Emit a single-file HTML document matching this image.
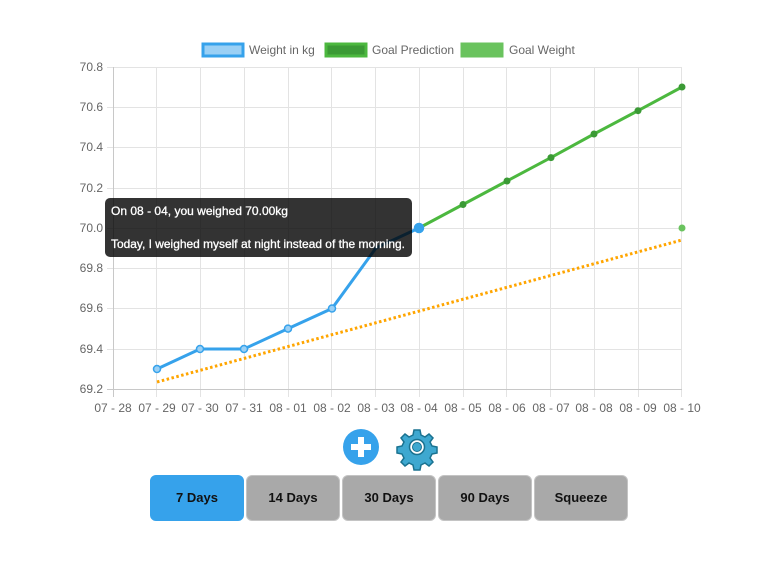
<!DOCTYPE html>
<html><head><meta charset="utf-8"><style>
body{margin:0;background:#fff;width:773px;height:574px;overflow:hidden;font-family:"Liberation Sans",Arial,sans-serif}
.b{position:absolute;top:475px;width:92px;height:44px;border:1px solid #c4c4c4;border-radius:6px;background:#a9a9a9;font:bold 13px "Liberation Sans",sans-serif;color:#111;text-align:center;line-height:44px}
</style></head><body>
<svg width="773" height="574" style="position:absolute;left:0;top:0" font-family="Liberation Sans, Arial, sans-serif">
<g stroke="#e3e3e3" stroke-width="1">
<line x1="107" y1="67.5" x2="682" y2="67.5"/><line x1="107" y1="107.5" x2="682" y2="107.5"/><line x1="107" y1="147.5" x2="682" y2="147.5"/><line x1="107" y1="188.5" x2="682" y2="188.5"/><line x1="107" y1="228.5" x2="682" y2="228.5"/><line x1="107" y1="268.5" x2="682" y2="268.5"/><line x1="107" y1="308.5" x2="682" y2="308.5"/><line x1="107" y1="349.5" x2="682" y2="349.5"/>
<line x1="156.5" y1="67" x2="156.5" y2="397"/><line x1="200.5" y1="67" x2="200.5" y2="397"/><line x1="244.5" y1="67" x2="244.5" y2="397"/><line x1="288.5" y1="67" x2="288.5" y2="397"/><line x1="331.5" y1="67" x2="331.5" y2="397"/><line x1="375.5" y1="67" x2="375.5" y2="397"/><line x1="419.5" y1="67" x2="419.5" y2="397"/><line x1="463.5" y1="67" x2="463.5" y2="397"/><line x1="506.5" y1="67" x2="506.5" y2="397"/><line x1="550.5" y1="67" x2="550.5" y2="397"/><line x1="594.5" y1="67" x2="594.5" y2="397"/><line x1="638.5" y1="67" x2="638.5" y2="397"/><line x1="681.5" y1="67" x2="681.5" y2="397"/>
</g>
<g stroke="#c8c8c8"><line x1="107" y1="389.5" x2="682" y2="389.5"/><line x1="113.5" y1="67" x2="113.5" y2="397"/></g>
<g fill="#666" font-size="12" text-anchor="end">
<text x="103" y="71">70.8</text><text x="103" y="111">70.6</text><text x="103" y="151">70.4</text><text x="103" y="192">70.2</text><text x="103" y="232">70.0</text><text x="103" y="272">69.8</text><text x="103" y="312">69.6</text><text x="103" y="353">69.4</text><text x="103" y="393">69.2</text>
</g>
<g fill="#666" font-size="12" text-anchor="middle">
<text x="113" y="412">07 - 28</text><text x="157" y="412">07 - 29</text><text x="200" y="412">07 - 30</text><text x="244" y="412">07 - 31</text><text x="288" y="412">08 - 01</text><text x="332" y="412">08 - 02</text><text x="376" y="412">08 - 03</text><text x="419" y="412">08 - 04</text><text x="463" y="412">08 - 05</text><text x="507" y="412">08 - 06</text><text x="551" y="412">08 - 07</text><text x="594" y="412">08 - 08</text><text x="638" y="412">08 - 09</text><text x="682" y="412">08 - 10</text>
</g>
<line x1="157" y1="382" x2="682" y2="240" stroke="#ffa500" stroke-width="3" stroke-dasharray="2.5,2.5"/>
<polyline points="419,228 463,204.5 507,181 551,157.6 594,134 638,110.7 682,87" fill="none" stroke="#4cb83f" stroke-width="3"/>
<g fill="#3b9a35"><circle cx="463" cy="204.5" r="3.5"/><circle cx="507" cy="181" r="3.5"/><circle cx="551" cy="157.6" r="3.5"/><circle cx="594" cy="134" r="3.5"/><circle cx="638" cy="110.7" r="3.5"/><circle cx="682" cy="87" r="3.5"/></g>
<circle cx="682" cy="228" r="3.5" fill="#6ac35e"/>
<polyline points="157,369 200,349 244,349 288,328.6 332,308.5 376,248 419,228" fill="none" stroke="#36a2eb" stroke-width="3"/>
<g fill="#9ad0f5" stroke="#36a2eb" stroke-width="1.5"><circle cx="157" cy="369" r="3.5"/><circle cx="200" cy="349" r="3.5"/><circle cx="244" cy="349" r="3.5"/><circle cx="288" cy="328.6" r="3.5"/><circle cx="332" cy="308.5" r="3.5"/><circle cx="419" cy="228" r="4.5" fill="#36a2eb"/></g>
<rect x="105" y="198" width="307" height="59" rx="5" fill="#000" fill-opacity="0.8"/>
<text x="111" y="215" fill="#fff" font-size="12" textLength="177" lengthAdjust="spacingAndGlyphs" stroke="#fff" stroke-width="0.3">On 08 - 04, you weighed 70.00kg</text>
<text x="111" y="248" fill="#fff" font-size="12" textLength="294" lengthAdjust="spacingAndGlyphs" stroke="#fff" stroke-width="0.3">Today, I weighed myself at night instead of the morning.</text>
<rect x="203" y="44" width="40" height="12" fill="#9ad0f5" stroke="#36a2eb" stroke-width="3"/>
<text x="249" y="54" fill="#666" font-size="12">Weight in kg</text>
<rect x="326" y="44" width="40" height="12" fill="#3b9a35" stroke="#4cb83f" stroke-width="3"/>
<text x="372" y="54" fill="#666" font-size="12">Goal Prediction</text>
<rect x="462" y="44" width="40" height="12" fill="#6ac35e" stroke="#6ac35e" stroke-width="3"/>
<text x="509" y="54" fill="#666" font-size="12">Goal Weight</text>
<circle cx="361" cy="447" r="18" fill="#36a2eb"/>
<path d="M361 437v20M351 447h20" stroke="#fff" stroke-width="6"/>
<g transform="translate(417,447)">
<path d="M-3,-17h6l1,5 4,2 4,-3 4,4 -3,4 2,4 5,1v6l-5,1 -2,4 3,4 -4,4 -4,-3 -4,2 -1,5h-6l-1,-5 -4,-2 -4,3 -4,-4 3,-4 -2,-4 -5,-1v-6l5,-1 2,-4 -3,-4 4,-4 4,3 4,-2z" fill="#3ea8d0" stroke="#1a7290" stroke-width="1.5"/>
<circle r="7.5" fill="#fff" stroke="#1a7290" stroke-width="1.5"/><circle r="4.5" fill="#3ea8d0" stroke="#1a7290" stroke-width="1"/>
</g>
</svg>
<div class="b" style="left:150px;background:#36a2eb;border-color:#36a2eb">7 Days</div>
<div class="b" style="left:246px">14 Days</div>
<div class="b" style="left:342px">30 Days</div>
<div class="b" style="left:438px">90 Days</div>
<div class="b" style="left:534px">Squeeze</div>
</body></html>
